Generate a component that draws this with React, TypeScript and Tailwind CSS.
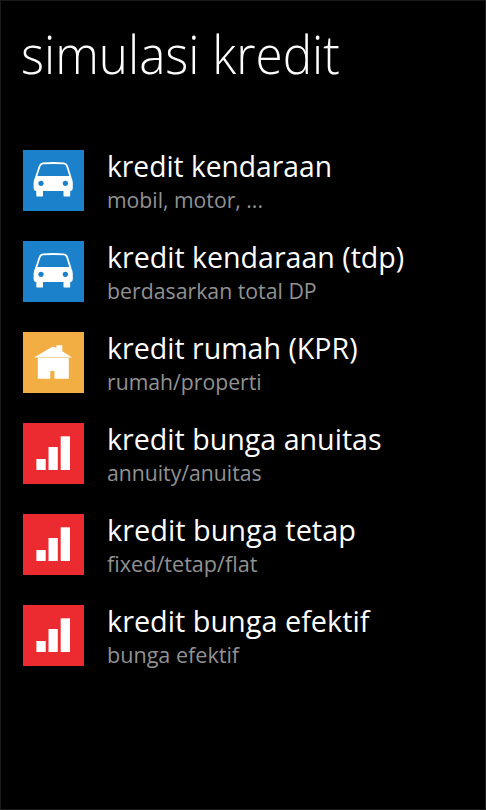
import type { ReactNode } from "react";

const CarIcon = () => (
  <svg viewBox="0 0 61 61" className="size-full">
    <path
      d="M13 27.2 L16.8 15.8 Q17.7 13.5 20 13.3 Q30.3 12.7 40.8 13.3 Q43.1 13.5 44 15.8 L47.6 27.2"
      fill="none"
      stroke="#fff"
      strokeWidth="1.8"
    />
    <path
      d="M13 26 H47.6 Q49.8 29 49.8 32.5 V37.5 Q49.8 41 47.2 41 V45.4 Q47.2 46.6 46 46.6 H41.7 Q40.5 46.6 40.5 45.4 V41 H20 V45.4 Q20 46.6 18.8 46.6 H14.5 Q13.3 46.6 13.3 45.4 V41 Q10.6 41 10.6 37.5 V32.5 Q10.6 29 13 26 Z"
      fill="#fff"
    />
    <circle cx="18" cy="33.3" r="2.6" fill="#1b81cb" />
    <circle cx="42.4" cy="33.3" r="2.6" fill="#1b81cb" />
  </svg>
);

const HouseIcon = () => (
  <svg viewBox="0 0 61 61" className="size-full">
    <path
      d="M11 25.4 L28.5 15.2 Q30.5 14.2 32.3 15.3 L33.4 16 V13.2 H39.3 V19.3 L49 25.4 Z"
      fill="#fff"
    />
    <path d="M14.8 25.9 H45.8 V46.8 H31.5 V39 H27.3 V46.8 H14.8 Z" fill="#fff" />
  </svg>
);

const BarsIcon = () => (
  <svg viewBox="0 0 61 61" className="size-full" fill="#fff">
    <rect x="13.4" y="36" width="9.3" height="11" />
    <rect x="25.5" y="24" width="9.3" height="23" />
    <rect x="37.7" y="13.3" width="9.3" height="33.7" />
  </svg>
);

type Item = {
  title: string;
  subtitle: string;
  tile: string;
  icon: ReactNode;
  titleFit: string;
  subtitleFit: string;
};

// titleFit / subtitleFit condense each line a little
const items: Item[] = [
  {
    title: "kredit kendaraan",
    subtitle: "mobil, motor, ...",
    tile: "bg-[#1b81cb]",
    icon: <CarIcon />,
    titleFit: "scale-x-[0.94]",
    subtitleFit: "scale-x-[0.963]",
  },
  {
    title: "kredit kendaraan (tdp)",
    subtitle: "berdasarkan total DP",
    tile: "bg-[#1b81cb]",
    icon: <CarIcon />,
    titleFit: "scale-x-[0.952]",
    subtitleFit: "scale-x-[0.967]",
  },
  {
    title: "kredit rumah (KPR)",
    subtitle: "rumah/properti",
    tile: "bg-[#f2ae43]",
    icon: <HouseIcon />,
    titleFit: "scale-x-[0.952]",
    subtitleFit: "scale-x-[0.963]",
  },
  {
    title: "kredit bunga anuitas",
    subtitle: "annuity/anuitas",
    tile: "bg-[#ec2b30]",
    icon: <BarsIcon />,
    titleFit: "scale-x-[0.954]",
    subtitleFit: "scale-x-[0.963]",
  },
  {
    title: "kredit bunga tetap",
    subtitle: "fixed/tetap/flat",
    tile: "bg-[#ec2b30]",
    icon: <BarsIcon />,
    titleFit: "scale-x-[0.963]",
    subtitleFit: "scale-x-[0.982]",
  },
  {
    title: "kredit bunga efektif",
    subtitle: "bunga efektif",
    tile: "bg-[#ec2b30]",
    icon: <BarsIcon />,
    titleFit: "scale-x-[0.961]",
    subtitleFit: "scale-x-[0.98]",
  },
];

export default function App() {
  return (
    <main className="h-screen w-full overflow-hidden border border-[#1a1a1a] bg-black px-[22px] pt-4 font-['Open_Sans',sans-serif] text-white">
      <h1 className="-ml-0.5 h-[72px] w-max origin-left scale-x-[0.915] text-[54px] leading-[72px] font-light whitespace-nowrap">
        simulasi kredit
      </h1>

      <ul className="mt-[61px] flex flex-col gap-[30px]">
        {items.map((item) => (
          <li key={item.title} className="flex h-[61px] gap-[23px]">
            <div className={`size-[61px] shrink-0 ${item.tile}`}>{item.icon}</div>
            <div className="-mt-0.5 whitespace-nowrap">
              <h2 className={`h-9 w-max origin-left text-[30px] leading-9 ${item.titleFit}`}>
                {item.title}
              </h2>
              <p className={`mt-px h-7 w-max origin-left text-[22px] leading-7 text-[#929292] ${item.subtitleFit}`}>
                {item.subtitle}
              </p>
            </div>
          </li>
        ))}
      </ul>
    </main>
  );
}
